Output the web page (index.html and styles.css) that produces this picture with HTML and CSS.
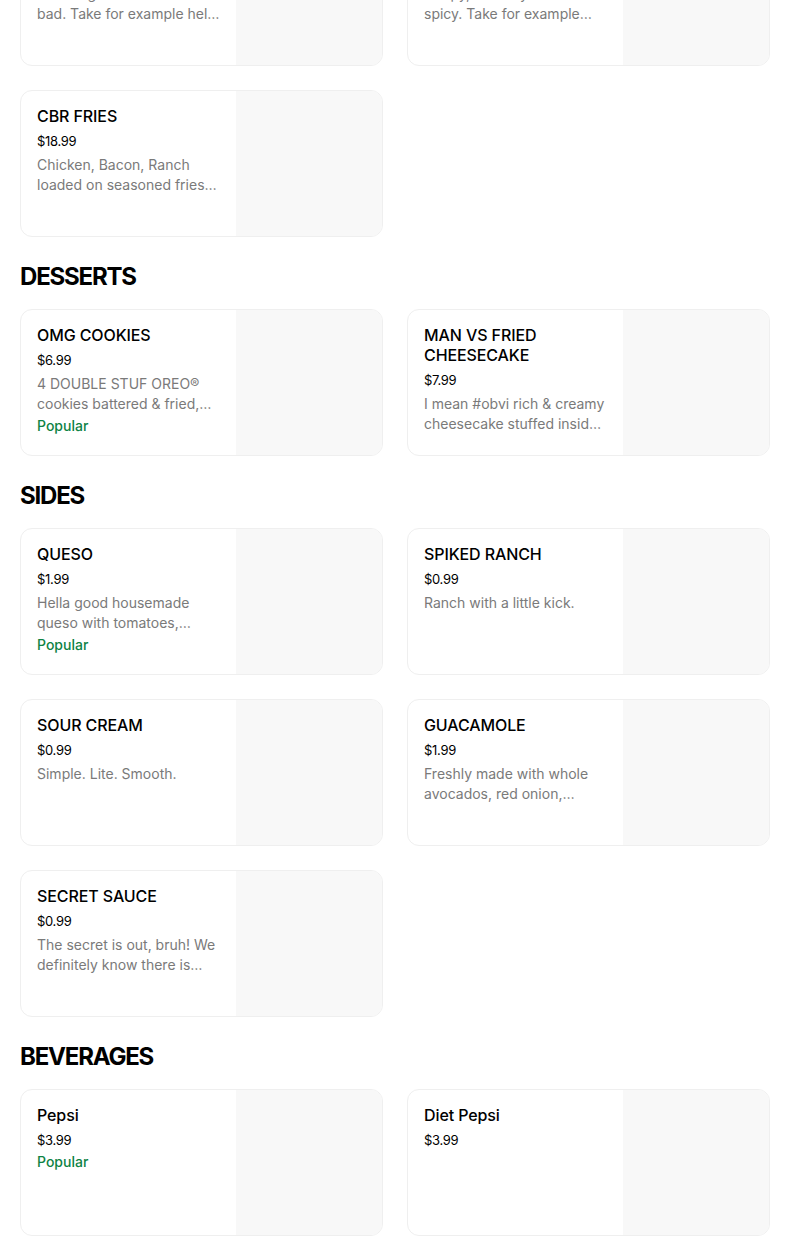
FILE: index.html
```html
<!DOCTYPE html>
<html lang="en">
<head>
<meta charset="utf-8">
<title>Menu</title>
<link rel="stylesheet" href="styles.css">
</head>
<body>
<main class="menu">
  <section class="section section-first">
    <div class="grid">
      <div class="card">
        <div class="info">
          <div class="title">HELLA HOT WINGS</div>
          <div class="price">$14.99</div>
          <div class="desc">Hot wings don't have to be<br>bad. Take for example hell yeah wings tossed in our sauce.</div>
        </div>
        <div class="thumb"></div>
      </div>
      <div class="card">
        <div class="info">
          <div class="title">NASHVILLE HOT</div>
          <div class="price">$15.99</div>
          <div class="desc">Crispy, crunchy and extra<br>spicy. Take for example Nashville hot tenders.</div>
        </div>
        <div class="thumb"></div>
      </div>
      <div class="card">
        <div class="info">
          <div class="title">CBR FRIES</div>
          <div class="price">$18.99</div>
          <div class="desc">Chicken, Bacon, Ranch loaded on seasoned fries, topped with cheese.</div>
        </div>
        <div class="thumb"></div>
      </div>
    </div>
  </section>

  <section class="section">
    <h2 class="heading">DESSERTS</h2>
    <div class="grid">
      <div class="card">
        <div class="info">
          <div class="title">OMG COOKIES</div>
          <div class="price">$6.99</div>
          <div class="desc">4 DOUBLE STUF OREO® cookies battered &amp; fried, dusted with powdered sugar.</div>
          <div class="popular">Popular</div>
        </div>
        <div class="thumb"></div>
      </div>
      <div class="card">
        <div class="info">
          <div class="title">MAN VS FRIED CHEESECAKE</div>
          <div class="price">$7.99</div>
          <div class="desc">I mean #obvi rich &amp; creamy cheesecake stuffed inside a crispy shell.</div>
        </div>
        <div class="thumb"></div>
      </div>
    </div>
  </section>

  <section class="section">
    <h2 class="heading">SIDES</h2>
    <div class="grid">
      <div class="card">
        <div class="info">
          <div class="title">QUESO</div>
          <div class="price">$1.99</div>
          <div class="desc">Hella good housemade queso with tomatoes, onions and peppers.</div>
          <div class="popular">Popular</div>
        </div>
        <div class="thumb"></div>
      </div>
      <div class="card">
        <div class="info">
          <div class="title">SPIKED RANCH</div>
          <div class="price">$0.99</div>
          <div class="desc">Ranch with a little kick.</div>
        </div>
        <div class="thumb"></div>
      </div>
      <div class="card">
        <div class="info">
          <div class="title">SOUR CREAM</div>
          <div class="price">$0.99</div>
          <div class="desc">Simple. Lite. Smooth.</div>
        </div>
        <div class="thumb"></div>
      </div>
      <div class="card">
        <div class="info">
          <div class="title">GUACAMOLE</div>
          <div class="price">$1.99</div>
          <div class="desc">Freshly made with whole avocados, red onion, cilantro and lime.</div>
        </div>
        <div class="thumb"></div>
      </div>
      <div class="card">
        <div class="info">
          <div class="title">SECRET SAUCE</div>
          <div class="price">$0.99</div>
          <div class="desc">The secret is out, bruh! We definitely know there is something special in here.</div>
        </div>
        <div class="thumb"></div>
      </div>
    </div>
  </section>

  <section class="section">
    <h2 class="heading">BEVERAGES</h2>
    <div class="grid">
      <div class="card">
        <div class="info">
          <div class="title">Pepsi</div>
          <div class="price">$3.99</div>
          <div class="popular">Popular</div>
        </div>
        <div class="thumb"></div>
      </div>
      <div class="card">
        <div class="info">
          <div class="title">Diet Pepsi</div>
          <div class="price">$3.99</div>
        </div>
        <div class="thumb"></div>
      </div>
    </div>
  </section>
</main>
</body>
</html>
```

FILE: styles.css
```css
html, body {
  margin: 0;
  padding: 0;
  background: #ffffff;
}

body {
  font-family: Inter, "Liberation Sans", sans-serif;
  color: #000000;
  overflow: hidden;
}

.menu {
  width: 750px;
  margin: -81px 0 0 20px;
}

.heading {
  margin: 24px 0 16px;
  font-size: 24px;
  line-height: 32px;
  font-weight: 700;
  letter-spacing: -1.2px;
}

.grid {
  display: grid;
  grid-template-columns: 1fr 1fr;
  gap: 24px;
}

.card {
  display: grid;
  grid-template-columns: 1fr 146px;
  height: 147px;
  box-sizing: border-box;
  border: 1px solid #efefef;
  border-radius: 12px;
  overflow: hidden;
  background: #ffffff;
}

.info {
  padding: 15px 16px 0 16px;
  min-width: 0;
}

.thumb {
  background: #f8f8f8;
}

.title {
  font-size: 16px;
  line-height: 20px;
  font-weight: 500;
  letter-spacing: -0.1px;
}

.price {
  margin-top: 5px;
  font-size: 13px;
  line-height: 20px;
  font-weight: 400;
  letter-spacing: -0.3px;
}

.desc {
  margin-top: 4px;
  font-size: 14px;
  line-height: 20px;
  color: #7a7a7a;
  display: -webkit-box;
  -webkit-line-clamp: 2;
  -webkit-box-orient: vertical;
  overflow: hidden;
}

.popular {
  margin-top: 2px;
  font-size: 14px;
  line-height: 20px;
  font-weight: 500;
  color: #0e8345;
}
```
